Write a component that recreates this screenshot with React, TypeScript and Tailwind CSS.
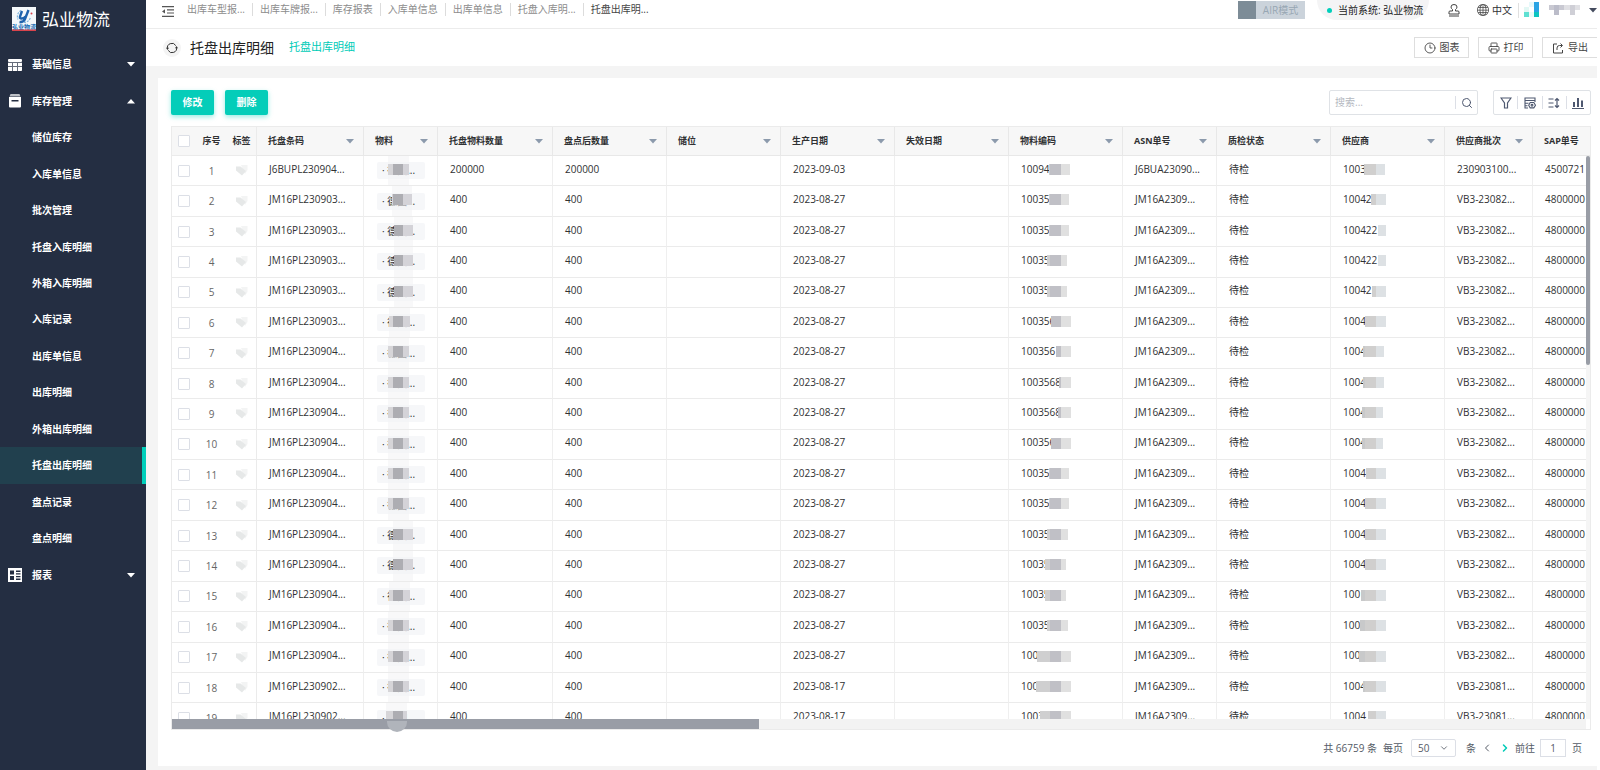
import type { ReactNode } from 'react';
import { ChevronLeft, ChevronRight, Clock3, Printer, Search } from 'lucide-react';
import { BsGlobe } from 'react-icons/bs';

interface MenuItem {
  label: string;
  icon?: ReactNode;
  open?: boolean;
}

interface Column {
  label: string;
  width: string;
  filter?: boolean;
}

interface Row {
  pallet: string;
  qty: string;
  date: string;
  code: string;
  asn: string;
  supplier: string;
  batch: string;
  sap: string;
  // masked ranges, in px from the left edge of the cell
  goodsMask: [number, number];
  codeMask: [number, number];
  supplierMask: [number, number];
}

type Stop = [number, number, string];

const GOODS_STOPS: Stop[] = [
  [20, 29, '#d6d5d8'],
  [29, 39, '#adadb2'],
  [39, 52, '#d4d3d8'],
];
const CODE_STOPS: Stop[] = [
  [20, 41, '#cfcfd0'],
  [41, 52, '#c0c0c6'],
  [52, 64, '#e0e0e0'],
];
const SUPPLIER_STOPS: Stop[] = [
  [20, 34, '#c8c9ca'],
  [34, 45, '#d0cfce'],
  [45, 56, '#dde1e4'],
];

const GridIcon = () => (
  <svg width="14" height="12" viewBox="0 0 14 12" fill="#fff">
    <rect width="14" height="3" rx="1" />
    <path d="M0 4h4v3H0zM5 4h4v3H5zM10 4h4v3h-4zM0 8h4v4H1a1 1 0 0 1-1-1zM5 8h4v4H5zM10 8h4v3a1 1 0 0 1-1 1h-3z" />
    <path d="M0 3h14v9H0z" opacity="0.3" />
  </svg>
);

const BoxIcon = () => (
  <svg width="14" height="14" viewBox="0 0 14 14" fill="#fff">
    <path d="M2.500 0h9l1 2.500h-11z" opacity="0.7" />
    <path fillRule="evenodd" d="M1 3h12v9.500a1 1 0 0 1-1 1H2a1 1 0 0 1-1-1zM3.500 6v1.500h7V6z" />
  </svg>
);

const ReportIcon = () => (
  <svg width="14" height="14" viewBox="0 0 14 14">
    <rect width="14" height="14" fill="#fff" />
    <path d="M2 2.500h4v4H2zM2 8h4v4H2zM8 2.500h4.500V4H8zM8 5.200h4.500v1.200H8zM8 8h4.500v1.300H8zM8 10.600h4.500V12H8z" fill="#242e42" />
  </svg>
);

const MENU: MenuItem[] = [
  { label: '基础信息', icon: <GridIcon />, open: false },
  { label: '库存管理', icon: <BoxIcon />, open: true },
  { label: '储位库存' },
  { label: '入库单信息' },
  { label: '批次管理' },
  { label: '托盘入库明细' },
  { label: '外箱入库明细' },
  { label: '入库记录' },
  { label: '出库单信息' },
  { label: '出库明细' },
  { label: '外箱出库明细' },
  { label: '托盘出库明细' },
  { label: '盘点记录' },
  { label: '盘点明细' },
  { label: '报表', icon: <ReportIcon />, open: false },
];

const TABS = ['出库车型报...', '出库车牌报...', '库存报表', '入库单信息', '出库单信息', '托盘入库明...', '托盘出库明...'];

const COLUMNS: Column[] = [
  { label: '托盘条码', width: 'w-[107px]', filter: true },
  { label: '物料', width: 'w-[74px]', filter: true },
  { label: '托盘物料数量', width: 'w-[115px]', filter: true },
  { label: '盘点后数量', width: 'w-[114px]', filter: true },
  { label: '储位', width: 'w-[114px]', filter: true },
  { label: '生产日期', width: 'w-[114px]', filter: true },
  { label: '失效日期', width: 'w-[114px]', filter: true },
  { label: '物料编码', width: 'w-[114px]', filter: true },
  { label: 'ASN单号', width: 'w-[94px]', filter: true },
  { label: '质检状态', width: 'w-[114px]', filter: true },
  { label: '供应商', width: 'w-[114px]', filter: true },
  { label: '供应商批次', width: 'w-[88px]', filter: true },
  { label: 'SAP单号', width: 'w-[114px]' },
];

const row = (
  pallet: string,
  code: string,
  supplier: string,
  goodsMask: [number, number],
  codeMask: [number, number],
  supplierMask: [number, number],
  extra: Partial<Row> = {},
): Row => ({
  pallet: `JM16PL${pallet}...`,
  qty: '400',
  date: '2023-08-27',
  code,
  asn: 'JM16A2309...',
  supplier,
  batch: 'VB3-23082...',
  sap: '4800000',
  goodsMask,
  codeMask,
  supplierMask,
  ...extra,
});

const ROWS: Row[] = [
  row('230904', '10094', '1003', [24, 45], [40, 61], [33, 54], {
    pallet: 'J6BUPL230904...',
    qty: '200000',
    date: '2023-09-03',
    asn: 'J6BUA23090...',
    batch: '230903100...',
    sap: '4500721',
  }),
  row('230903', '10035', '10042', [28, 48], [40, 60], [40, 55]),
  row('230903', '10035', '100422', [30, 49], [40, 60], [47, 55]),
  row('230903', '10035', '100422', [30, 49], [38, 58], [47, 55]),
  row('230903', '10035', '10042', [30, 49], [38, 58], [41, 55]),
  row('230903', '100356', '1004', [25, 46], [42, 62], [34, 55]),
  row('230904', '100356', '1004', [24, 45], [47, 62], [32, 53]),
  row('230904', '1003568', '1004', [24, 45], [50, 62], [32, 53]),
  row('230904', '1003568', '1004', [24, 45], [49, 62], [31, 52]),
  row('230904', '100356', '1004', [24, 45], [42, 62], [31, 52]),
  row('230904', '10035', '1004', [24, 45], [40, 60], [35, 55]),
  row('230904', '10035', '1004', [24, 45], [40, 60], [34, 55]),
  row('230904', '10035', '1004', [29, 49], [38, 59], [34, 55]),
  row('230904', '10035', '1004', [29, 49], [36, 57], [34, 55]),
  row('230904', '10035', '100', [25, 46], [36, 57], [30, 55]),
  row('230904', '10035', '100', [24, 45], [38, 59], [29, 55]),
  row('230904', '100', '100', [24, 45], [28, 62], [28, 55]),
  row('230902', '100', '1004', [24, 45], [27, 62], [32, 55], { date: '2023-08-17', batch: 'VB3-23081...' }),
  row('230902', '1003', '1004', [22, 43], [31, 62], [37, 55], { date: '2023-08-17', batch: 'VB3-23081...' }),
];

function Caret({ up, className }: { up?: boolean; className?: string }) {
  return (
    <svg width="8" height="5" viewBox="0 0 8 5" fill="currentColor" className={className}>
      <path d={up ? 'M4 0l4 4.500H0z' : 'M0 0h8L4 4.500z'} />
    </svg>
  );
}

function Mask({ range, stops }: { range: [number, number]; stops: Stop[] }) {
  const [from, to] = range;
  return (
    <>
      {stops.map(([a, b, color]) => {
        const left = Math.max(a, from);
        const width = Math.min(b, to) - left;
        if (width <= 0) return null;
        return <span key={a} className="absolute top-[8px] h-[11px]" style={{ left, width, backgroundColor: color }} />;
      })}
    </>
  );
}

function Logo() {
  return (
    <svg width="24" height="24" viewBox="0 0 24 24">
      <rect width="24" height="24" fill="#f4f8fb" />
      <path d="M9 3.500A7 7 0 0 0 6 12.500M12 15.500a7 7 0 0 0 6.500-5" fill="none" stroke="#7fb6de" strokeWidth="1.200" strokeDasharray="2 1" />
      <path d="M10 4l-2 5.500q-.5 2 1.500 2 2.500 0 4-2M16.500 3l-3.500 9q-1.500 3.500-5.500 3" fill="none" stroke="#1f63ad" strokeWidth="2.400" />
      <circle cx="19.500" cy="6.500" r="1" fill="#d8434e" />
      <text x="12" y="21.500" textAnchor="middle" fontSize="6" fontWeight="bold" fill="#1a6fb5">弘业物流</text>
      <rect y="22.500" width="24" height="1.500" fill="#d9434b" />
    </svg>
  );
}

function Sidebar() {
  return (
    <aside className="w-[146px] shrink-0 bg-[#242e42] text-white">
      <div className="flex h-[46px] items-center gap-[6px] pb-[8px] pl-[12px]">
        <Logo />
        <span className="text-[17px] leading-none">弘业物流</span>
      </div>
      <nav className="grid h-[547px] auto-rows-fr">
        {MENU.map((item) => {
          const active = item.label === '托盘出库明细';
          return (
            <a
              key={item.label}
              href="#"
              className={`flex items-center border-r-4 pt-px pl-[8px] text-[10px] font-bold ${
                active ? 'border-[#00cfbb] bg-[#21404e]' : 'border-transparent'
              }`}
            >
              <span className="w-[24px]">{item.icon}</span>
              <span className="flex-1">{item.label}</span>
              {item.icon && <Caret up={item.open} className="mr-[7px]" />}
            </a>
          );
        })}
      </nav>
    </aside>
  );
}

function TopBar() {
  return (
    <header className="flex h-[29px] items-start border-b border-[#ececec] pl-[16px] text-[10px] text-[#303133]">
      <button type="button" aria-label="收起菜单" className="mt-[6px] text-[#555]">
        <svg width="12" height="11" viewBox="0 0 12 11" fill="currentColor">
          <path d="M0 0h12v1.200H0zM5 3.200h7v1.200H5zM5 6.400h7v1.200H5zM0 9.700h12v1.200H0zM0 5.400l3-2.200v4.400z" />
        </svg>
      </button>
      <div className="mt-[3px] ml-[6px] flex">
        {TABS.map((tab, i) => (
          <a
            key={tab}
            href="#"
            className={`h-[13px] px-[7px] leading-[12px] ${
              i === TABS.length - 1 ? 'text-[#444]' : 'border-r border-[#dcdcdc] text-[#8c8c8c]'
            }`}
          >
            {tab}
          </a>
        ))}
      </div>
      <div className="ml-auto flex h-[20px] items-center">
        <button type="button" className="mr-[12px] flex h-[18px] w-[67px] items-center bg-[#cbd3db] text-[#98a7b3]">
          <span className="h-full w-[18px] bg-[#7d8c97]" />
          <span className="flex-1 text-center">AIR模式</span>
        </button>
        <span className="flex h-[20px] w-[112px] items-center gap-[6px] rounded-b-full bg-[#f4f4f5] pl-[10px] whitespace-nowrap text-[#222]">
          <i className="size-[5px] rounded-full bg-[#00cfbb]" />
          当前系统: 弘业物流
        </span>
        <svg width="12" height="13" viewBox="0 0 12 13" fill="none" stroke="#444" className="ml-[19px]">
          <path d="M4.500 7V5.500Q3 4.500 3 3a3 2.500 0 0 1 6 0q0 1.500-1.500 2.500V7h2.500q1 0 1 1v2H1V8q0-1 1-1zM1 12h10" />
        </svg>
        <BsGlobe size={12} className="ml-[17px] text-[#444]" />
        <span className="ml-[3px] border-r border-[#e0e0e0] pr-[6px]">中文</span>
        <svg width="16" height="16" viewBox="0 0 16 16" className="ml-[5px]">
          <path d="M0 5h5v5H0z" fill="#e3f8f5" />
          <path d="M5 0h5v5H5z" fill="#e6f9fb" />
          <path d="M10 0h5v10h-5z" fill="#2aa4e4" />
          <path d="M0 10h5v5H0z" fill="#5fe0d2" />
          <path d="M5 10h5v5H5z" fill="#ecfbf9" />
          <path d="M10 10h5v5h-5z" fill="#0cc5c0" />
        </svg>
        <svg width="32" height="12" viewBox="0 0 32 12" className="ml-[9px]">
          <path d="M0 1h5v5H0zM10 1h5v5h-5z" fill="#c9c9d2" />
          <path d="M5 1h5v10H5z" fill="#bbbcc9" />
          <path d="M15 1h6v5h-6zM26 1h5v5h-5z" fill="#e0e0e4" />
          <path d="M21 1h5v10h-5z" fill="#cfcfd6" />
        </svg>
        <Caret className="ml-[8px] text-[#444b5e]" />
      </div>
    </header>
  );
}

function TitleBar() {
  const button = 'flex h-[21px] w-[55px] items-center justify-center gap-[4px] border border-[#dedede] text-[#444]';
  return (
    <div className="flex h-[37px] items-center bg-white pl-[17px] text-[10px]">
      <button type="button" aria-label="刷新" className="flex size-[18px] items-center justify-center rounded-full bg-[#f4f4f4]">
        <svg width="12" height="12" viewBox="0 0 12 12" fill="none" stroke="#333">
          <path d="M1.500 6.800A4.500 4.500 0 0 1 9.800 3.600M10.500 5.200A4.500 4.500 0 0 1 2.200 8.400" />
          <path d="M0 5.800h3L1.500 8zM9 6.200h3L10.500 4z" fill="#333" stroke="none" />
        </svg>
      </button>
      <h1 className="ml-[9px] text-[14px] leading-none text-[#222]">托盘出库明细</h1>
      <a href="#" className="ml-[15px] text-[11px] text-[#00cbb7]">托盘出库明细</a>
      <div className="ml-auto flex gap-[9px]">
        <button type="button" className={button}>
          <Clock3 size={12} strokeWidth={1.750} />
          图表
        </button>
        <button type="button" className={button}>
          <Printer size={12} strokeWidth={1.750} />
          打印
        </button>
        <button type="button" className={`${button} border-r-0`}>
          <svg width="12" height="12" viewBox="0 0 12 12" fill="none" stroke="currentColor">
            <path d="M5 2H1.500v9h9V8M5 8V6q0-2.500 2.500-2.500H10M8.500 1.500l2 2-2 2" />
          </svg>
          导出
        </button>
      </div>
    </div>
  );
}

function Toolbar() {
  const primary =
    'h-[25px] w-[43px] rounded-[2px] bg-[#04cdb9] text-[10px] font-bold text-white shadow-[0_2px_5px_rgba(4,205,185,0.4)]';
  const tool = 'flex h-[13px] flex-1 items-center justify-center border-r border-[#dcdfe6] last:border-r-0';
  return (
    <div className="flex h-[25px] items-center gap-[11px]">
      <button type="button" className={primary}>修改</button>
      <button type="button" className={primary}>删除</button>
      <label className="ml-auto flex h-[25px] w-[149px] items-center rounded-[2px] border border-[#dfe2e6] pl-[5px]">
        <input
          type="text"
          aria-label="搜索"
          placeholder="搜索..."
          className="w-[120px] text-[10px] outline-none placeholder:text-[#b4b8bf]"
        />
        <span className="flex h-[13px] flex-1 items-center justify-center border-l border-[#dcdfe6]">
          <Search size={12} className="text-[#4e5870]" />
        </span>
      </label>
      <div className="ml-[4px] flex h-[25px] w-[98px] items-center rounded-[2px] border border-[#dfe2e6] text-[#4e5870]">
        <button type="button" aria-label="筛选" className={tool}>
          <svg width="12" height="12" viewBox="0 0 12 12" fill="none" stroke="currentColor" strokeWidth="1.200">
            <path d="M1 1h10L7.500 6v5h-3V6z" />
          </svg>
        </button>
        <button type="button" aria-label="列设置" className={tool}>
          <svg width="12" height="12" viewBox="0 0 12 12" fill="none" stroke="currentColor" strokeWidth="1.100">
            <path d="M1 1h10v2.500H1zM1 3.500V11h3M1 6.200h3.500M1 8.700h2.500M11 3.500V5" />
            <path d="M6.200 5.500h3.600l1.700 2.700-1.700 2.700H6.200L4.700 8.200z" />
            <circle cx="8" cy="8.200" r="0.900" />
          </svg>
        </button>
        <button type="button" aria-label="行高" className={tool}>
          <svg width="12" height="12" viewBox="0 0 12 12" fill="none" stroke="currentColor" strokeWidth="1.200">
            <path d="M0.500 2h5M0.500 6h5M0.500 10h5M9 1.500v9M7 3.500l2-2 2 2M7 8.500l2 2 2-2" />
          </svg>
        </button>
        <button type="button" aria-label="统计" className={tool}>
          <svg width="12" height="12" viewBox="0 0 12 12" fill="none" stroke="currentColor">
            <path d="M2 5v5M6 1v9M10 3.500V10" strokeWidth="2" />
            <path d="M0 11.500h12" />
          </svg>
        </button>
      </div>
    </div>
  );
}

function DetailTable() {
  const box = 'mx-auto block size-[12px] appearance-none rounded-[1px] border border-[#dcdfe6] bg-white';
  const cell = 'border-r border-b border-r-[#efefef] border-b-[#ebebeb] p-0 pb-[4px] pl-[12px] whitespace-nowrap';
  const plain = 'border-b border-[#ebebeb] p-0 text-center';
  return (
    <div className="relative flex min-h-0 flex-1 flex-col border border-[#ebebeb]">
      <div className="min-h-0 flex-1 overflow-hidden">
        <table className="h-[607px] w-full table-fixed border-separate border-spacing-0 text-[10px] leading-[14px] text-[#303133]">
          <thead>
            <tr className="h-[29px] bg-[#f7f7f7] text-[9px]">
              <th className={`${plain} h-[29px] w-[24px]`}>
                <input type="checkbox" aria-label="全选" className={box} />
              </th>
              <th className={`${plain} w-[31px]`}>序号</th>
              <th className={`${plain} w-[30px] border-r`}>标签</th>
              {COLUMNS.map((col) => (
                <th
                  key={col.label}
                  className={`${col.width} border-r border-b border-[#e8e8e8] p-0 pr-[9px] pl-[11px] text-left whitespace-nowrap`}
                >
                  <span className="flex items-center justify-between">
                    {col.label}
                    {col.filter && <Caret className="text-[#8c9aac]" />}
                  </span>
                </th>
              ))}
            </tr>
          </thead>
          <tbody>
            {ROWS.map((r, i) => (
              <tr key={i}>
                <td className={plain}>
                  <input type="checkbox" aria-label={`选择第${i + 1}行`} className={box} />
                </td>
                <td className={`${plain} text-[#666]`}>{i + 1}</td>
                <td className={`${plain} border-r`}>
                  <svg width="12" height="11" viewBox="0 0 12 11" className="mx-auto">
                    <path d="M5 0h6.500v5L9 9z" fill="#f3f4f4" />
                    <path d="M0 1.500h4.500L10 6 6 10.500 0 5.500z" fill="#e6e8e8" />
                  </svg>
                </td>
                <td className={cell}>{r.pallet}</td>
                <td className="relative border-r border-b border-r-[#efefef] border-b-[#ebebeb] p-0 pl-[13px]">
                  <span className="block h-[17px] w-[48px] rounded-[2px] bg-[#f6f7f9] pl-[5px] leading-[17px] whitespace-nowrap">
                    · 德国...
                  </span>
                  <span
                    className="absolute inset-y-0 bg-[#f3f4f5]/60"
                    style={{ left: r.goodsMask[0], width: r.goodsMask[1] - r.goodsMask[0] }}
                  />
                  <Mask range={r.goodsMask} stops={GOODS_STOPS} />
                </td>
                <td className={cell}>{r.qty}</td>
                <td className={cell}>{r.qty}</td>
                <td className={cell} />
                <td className={cell}>{r.date}</td>
                <td className={cell} />
                <td className={`${cell} relative`}>
                  {r.code}
                  <Mask range={r.codeMask} stops={CODE_STOPS} />
                </td>
                <td className={cell}>{r.asn}</td>
                <td className={cell}>待检</td>
                <td className={`${cell} relative`}>
                  {r.supplier}
                  <Mask range={r.supplierMask} stops={SUPPLIER_STOPS} />
                </td>
                <td className={cell}>{r.batch}</td>
                <td className={cell}>{r.sap}</td>
              </tr>
            ))}
          </tbody>
        </table>
      </div>
      {/* Scroll bars */}
      <div className="relative mr-[4px] h-[10px] shrink-0 bg-[#f3f3f3]">
        <div className="h-full w-[587px] bg-[#999da6]" />
        <span className="absolute top-[2px] left-[215px] h-[11px] w-[20px] rounded-b-full bg-[#b0b4bb]" />
      </div>
      <div className="absolute top-[29px] right-0 bottom-[10px] w-[4px] bg-[#f5f5f5]">
        <div className="h-[209px] rounded-full bg-[#999da6]" />
      </div>
    </div>
  );
}

function Pagination() {
  return (
    <footer className="flex h-[36px] shrink-0 items-center justify-end pr-[9px] text-[10px] text-[#555b66]">
      <span>共 66759 条</span>
      <label htmlFor="page-size" className="ml-[6px]">每页</label>
      <span className="relative ml-[8px]">
        <select
          id="page-size"
          defaultValue="50"
          className="h-[18px] w-[45px] appearance-none rounded-[2px] border border-[#dcdfe6] bg-white pl-[6px] text-[10px]"
        >
          <option>20</option>
          <option>50</option>
          <option>100</option>
        </select>
        <ChevronRight size={10} className="pointer-events-none absolute top-[4px] right-[7px] rotate-90" />
      </span>
      <span className="ml-[10px]">条</span>
      <button type="button" aria-label="上一页" className="ml-[5px]">
        <ChevronLeft size={12} />
      </button>
      <button type="button" aria-label="下一页" className="ml-[6px] text-[#00cbb7]">
        <ChevronRight size={12} strokeWidth={3} />
      </button>
      <label htmlFor="page-no" className="ml-[4px]">前往</label>
      <input
        id="page-no"
        type="text"
        defaultValue="1"
        className="mr-[6px] ml-[5px] h-[18px] w-[26px] border border-[#dcdfe6] text-center text-[10px]"
      />
      <span>页</span>
    </footer>
  );
}

export default function App() {
  return (
    <div className="flex h-screen min-h-[640px] overflow-hidden bg-white pr-[3px] font-['Open_Sans','Noto_Sans_CJK_SC',sans-serif]">
      <Sidebar />
      <div className="flex min-w-0 flex-1 flex-col">
        <TopBar />
        <TitleBar />
        <main className="flex min-h-0 flex-1 flex-col bg-[#f4f4f4] pt-[12px] pb-[4px] pl-[12px]">
          <section className="flex min-h-0 flex-1 flex-col bg-white pt-[12px] pr-[6px] pl-[13px]">
            <Toolbar />
            <div className="mt-[11px] flex min-h-0 flex-1 flex-col">
              <DetailTable />
            </div>
            <Pagination />
          </section>
        </main>
      </div>
    </div>
  );
}
